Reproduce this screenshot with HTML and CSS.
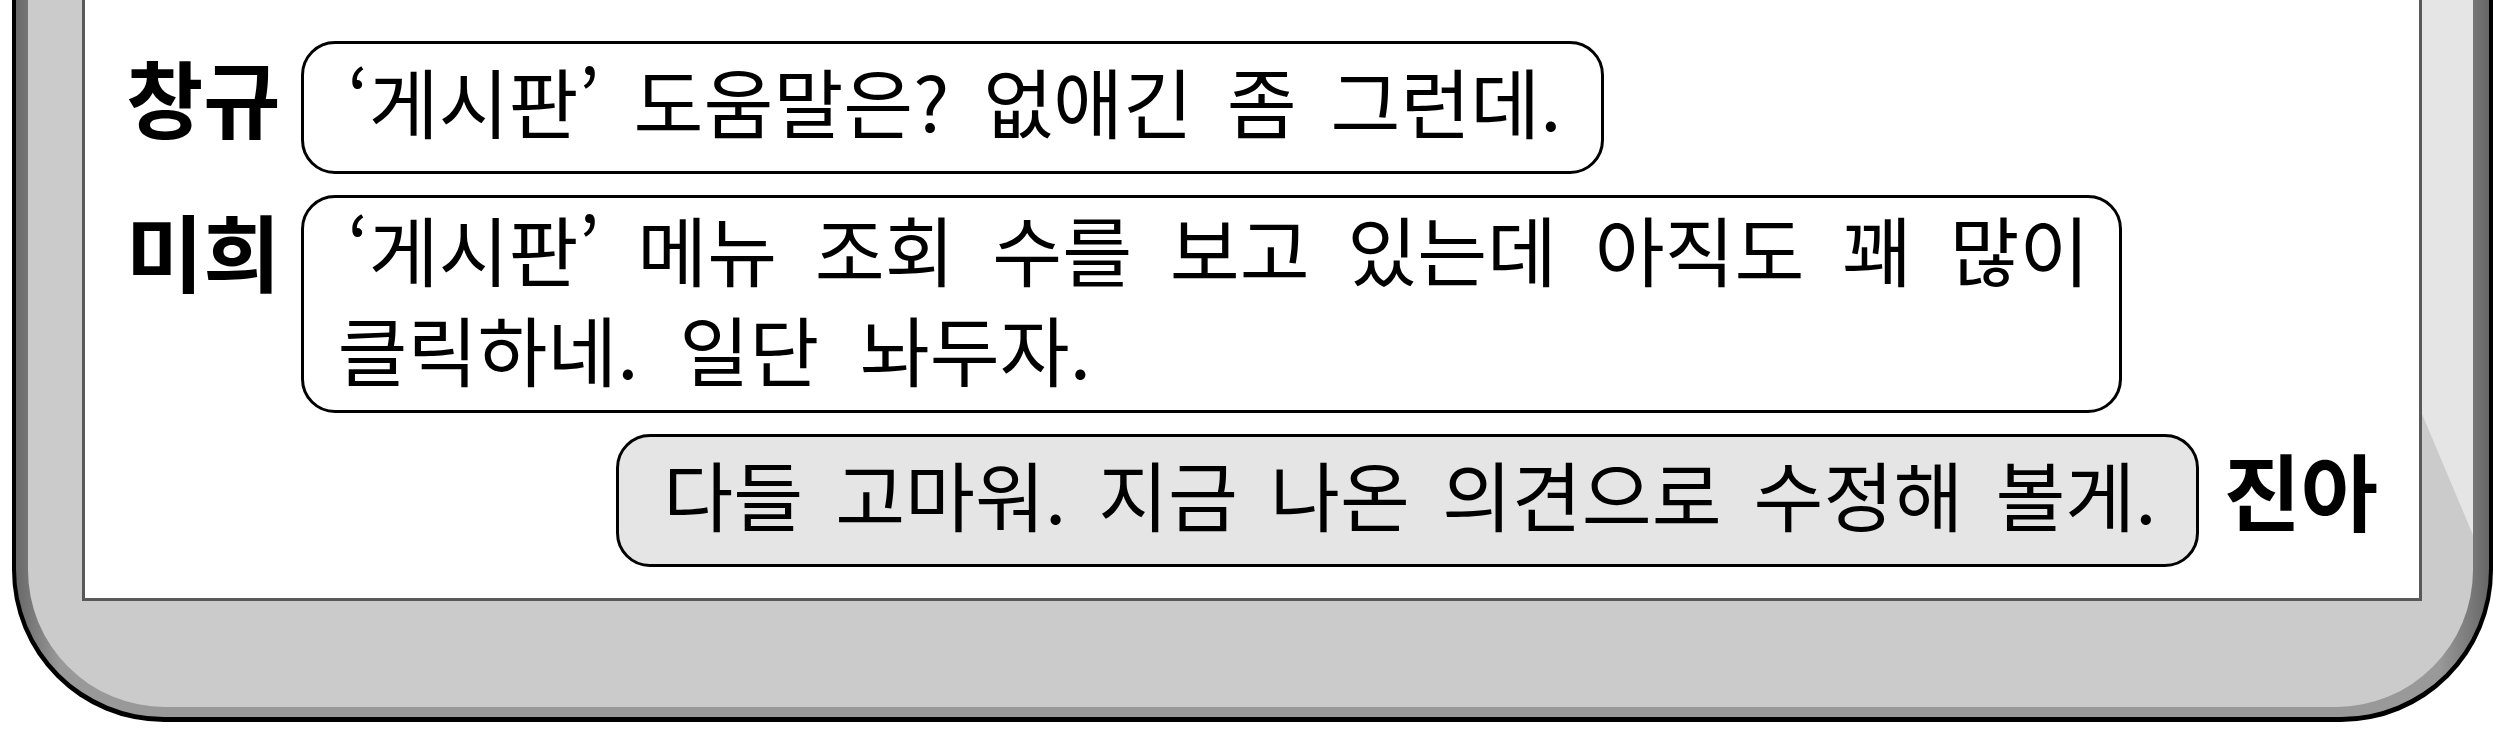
FILE: index.html
```html
<!DOCTYPE html>
<html lang="ko">
<head>
<meta charset="utf-8">
<meta name="viewport" content="width=device-width, initial-scale=1">
<title>대화방</title>
<link rel="stylesheet" href="styles.css">
</head>
<body>
<div class="device">
  <div class="rim">
    <div class="face">
      <main class="screen">
        <div class="message">
          <strong class="name">창규</strong>
          <p class="bubble bubble-short"><span class="line">‘게시판’ 도움말은? 없애긴 좀 그런데.</span></p>
        </div>
        <div class="message">
          <strong class="name">미희</strong>
          <p class="bubble bubble-long"><span class="line line-first">‘게시판’ 메뉴 조회 수를 보고 있는데 아직도 꽤 많이</span> <span class="line line-last">클릭하네. 일단 놔두자.</span></p>
        </div>
        <div class="message message-own">
          <strong class="name">진아</strong>
          <p class="bubble bubble-own"><span class="line">다들 고마워. 지금 나온 의견으로 수정해 볼게.</span></p>
        </div>
      </main>
    </div>
  </div>
</div>
</body>
</html>
```

FILE: styles.css
```css
* {
  box-sizing: border-box;
}

body {
  margin: 0;
  padding: 0 12px;
  background: #fff;
  color: #000;
  font-family: "Noto Sans CJK KR", sans-serif;
  font-size: 76px;
  line-height: 100px;
}

/* Device shell: outline, shaded rim, flat face */
.device {
  padding: 0 4px 5px;
  border-radius: 0 0 152px 152px;
  background: #000;
}

.rim {
  padding: 0 16px 10px 12px;
  border-radius: 0 0 148px 148px;
  background: linear-gradient(to right, #696969 0, #777 14px, #999 44px, #999 calc(100% - 50px), #777 calc(100% - 16px), #666 100%);
}

.face {
  position: relative;
  padding: 0 51px 106px 54px;
  border-radius: 0 0 137px 137px;
  background: #cbcbcb;
}

/* Light reflection along the right edge */
.face::after {
  content: "";
  position: absolute;
  top: 0;
  right: 0;
  width: 51px;
  height: 535px;
  background: #e5e5e5;
  clip-path: polygon(0 0, 100% 0, 100% 100%, 0 414px);
}

.screen {
  display: flex;
  flex-direction: column;
  gap: 21px;
  padding: 41px 41px 31px;
  border: 3px solid #595959;
  border-top: 0;
  background: #fff;
}

.message {
  display: flex;
  align-items: flex-start;
  gap: 20px;
}

.message-own {
  flex-direction: row-reverse;
  gap: 24px;
}

.name {
  flex: none;
  padding-top: 5px;
  font-size: 84px;
  font-weight: 700;
}

.bubble {
  margin: 0;
  padding: 6px 40px 21px 44px;
  border: 3px solid #000;
  border-radius: 34px;
}

.bubble-short {
  width: 57.9%;
}

.bubble-long {
  width: 80.9%;
  padding: 0 30px 12px 34px;
}

.bubble-own {
  width: 70.3%;
  background: #e5e5e5;
}

.line {
  display: block;
  text-align: justify;
  text-align-last: justify;
}

.line-first {
  padding-left: 10px;
}

.line-last {
  width: 43%;
}
```
